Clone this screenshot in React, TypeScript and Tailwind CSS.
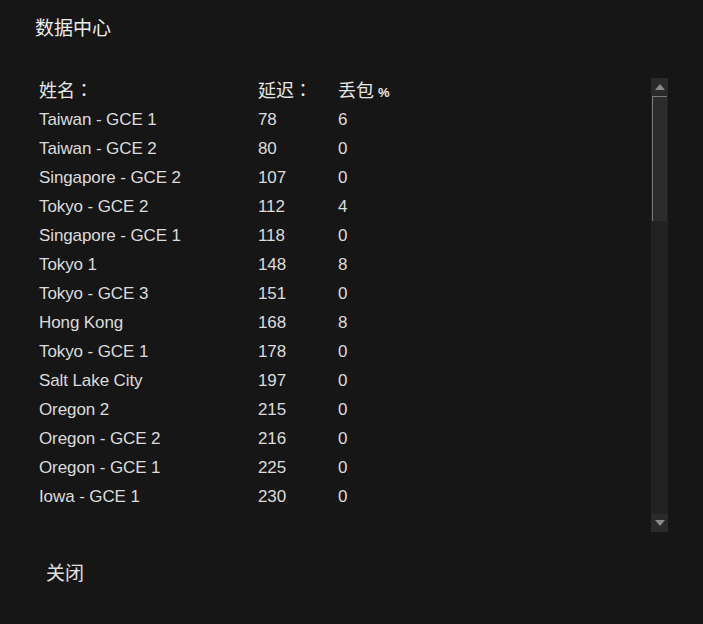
import React from "react";

const rows: [string, number, number][] = [
  ["Taiwan - GCE 1", 78, 6],
  ["Taiwan - GCE 2", 80, 0],
  ["Singapore - GCE 2", 107, 0],
  ["Tokyo - GCE 2", 112, 4],
  ["Singapore - GCE 1", 118, 0],
  ["Tokyo 1", 148, 8],
  ["Tokyo - GCE 3", 151, 0],
  ["Hong Kong", 168, 8],
  ["Tokyo - GCE 1", 178, 0],
  ["Salt Lake City", 197, 0],
  ["Oregon 2", 215, 0],
  ["Oregon - GCE 2", 216, 0],
  ["Oregon - GCE 1", 225, 0],
  ["Iowa - GCE 1", 230, 0],
];

const latin = {
  fontFamily: '"Liberation Sans", "Noto Sans CJK SC", sans-serif',
};
const cjk = {
  fontFamily: '"Noto Sans CJK SC", "Liberation Sans", sans-serif',
};
const colon = {
  fontFamily: '"Noto Sans CJK TC", "Noto Sans CJK SC", sans-serif',
};

export default function App() {
  return (
    <div className="w-[703px] h-[624px] bg-[#161616] text-[#dcdcdc] flex flex-col">
      <div
        className="pl-[35px] pt-[15px] text-[19px] leading-[24px] text-[#ececec]"
        style={cjk}
      >
        数据中心
      </div>

      <div className="mt-[39px] ml-[39px] mr-[35px] h-[454px] flex">
        <div className="flex-1">
          <div
            className="flex h-[22px] items-center text-[18px] text-[#e6e6e6]"
            style={cjk}
          >
            <div className="w-[219px]">
              姓名<span style={colon}>：</span>
            </div>
            <div className="w-[80px]">
              延迟<span style={colon}>：</span>
            </div>
            <div>
              丢包{" "}
              <span className="text-[13px] font-bold" style={latin}>
                %
              </span>
            </div>
          </div>
          <div className="mt-[5px] flex flex-col" style={latin}>
            {rows.map(([name, ping, loss]) => (
              <div
                key={name}
                className="flex h-[29px] items-center text-[17px] tracking-[-0.1px]"
              >
                <div className="w-[219px]">{name}</div>
                <div className="w-[80px]">{ping}</div>
                <div>{loss}</div>
              </div>
            ))}
          </div>
        </div>

        <div className="w-[17px] bg-[#222222] flex flex-col">
          <div className="h-[18px] bg-[#2a2a2a] flex items-center justify-center">
            <svg width="10" height="6" viewBox="0 0 10 6">
              <path d="M5 0 L10 6 L0 6 Z" fill="#8a8a8a" />
            </svg>
          </div>
          <div className="mx-[1px] h-[125px] bg-[#2c2c2c] border-l border-t border-[#7a7a7a]" />
          <div className="flex-1" />
          <div className="h-[18px] bg-[#2a2a2a] flex items-center justify-center">
            <svg width="10" height="6" viewBox="0 0 10 6">
              <path d="M0 0 L10 0 L5 6 Z" fill="#8a8a8a" />
            </svg>
          </div>
        </div>
      </div>

      <div
        className="pl-[46px] mt-[28px] text-[19px] leading-[24px] text-[#e0e0e0]"
        style={cjk}
      >
        关闭
      </div>
    </div>
  );
}
